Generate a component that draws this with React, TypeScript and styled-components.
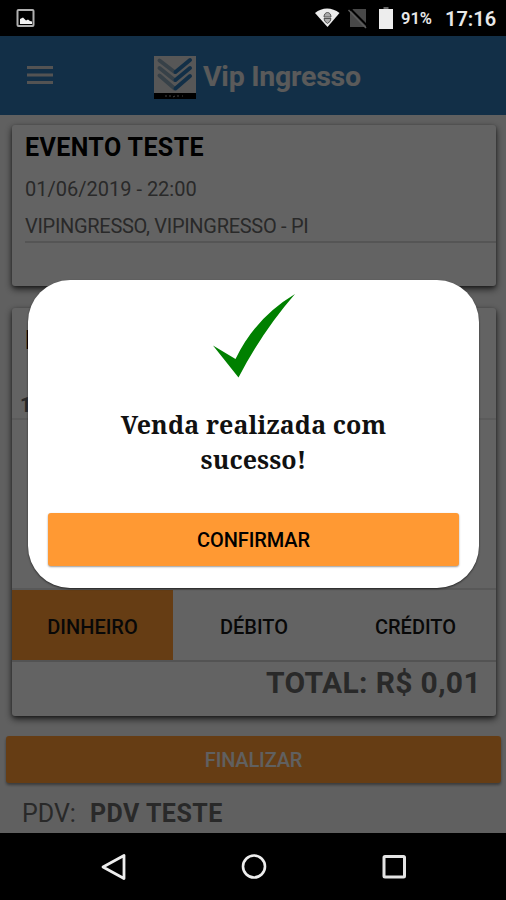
import React from "react";
import styled, { createGlobalStyle } from "styled-components";

const GlobalStyle = createGlobalStyle`
  * { box-sizing: border-box; }
  body { margin: 0; background: #000; font-family: Roboto, sans-serif; }
  button { font-family: inherit; border: 0; padding: 0; }
`;

const Phone = styled.div`
  width: 506px;
  height: 900px;
  display: flex;
  flex-direction: column;
  background: #000;
  overflow: hidden;
`;

const StatusBar = styled.div`
  height: 36px;
  flex: none;
  display: flex;
  align-items: center;
  padding: 0 11px 0 16px;
  color: #e8e8e8;
`;

const StatusIcons = styled.div`
  margin-left: auto;
  display: flex;
  align-items: center;
`;

const Battery = styled.span`
  width: 33px;
  margin-left: 8px;
  font-size: 16.5px;
  font-weight: 600;
  line-height: 36px;
  padding-top: 2px;
  white-space: nowrap;
`;

const Clock = styled.span`
  margin-left: 11px;
  width: 50px;
  font-size: 20px;
  font-weight: 600;
  line-height: 36px;
  padding-top: 2px;
  white-space: nowrap;
`;

const Screen = styled.main`
  position: relative;
  height: 797px;
  flex: none;
  display: flex;
  flex-direction: column;
  background: #f0f0f0;
`;

const Header = styled.header`
  height: 79px;
  flex: none;
  display: flex;
  align-items: center;
  background: #2f77b2;
  padding: 0 0 1px 27px;
`;

const Brand = styled.div`
  display: flex;
  align-items: center;
  margin-left: 100px;
  padding-top: 5px;
  gap: 7px;
`;

const BrandName = styled.h1`
  margin: -2px 0 0;
  font-size: 28.5px;
  font-weight: 700;
  line-height: 40px;
  color: #e0e0e0;
  letter-spacing: -0.25px;
`;

const Card = styled.section<{ $height: number; $top: number }>`
  height: ${(p) => p.$height}px;
  flex: none;
  margin: ${(p) => p.$top}px 10px 0 12px;
  display: flex;
  flex-direction: column;
  border-radius: 3px;
  background: #f8f8f8;
  box-shadow: 0 3px 7px rgba(0, 0, 0, 0.7), 0 1px 3px rgba(0, 0, 0, 0.3);
`;

const EventTitle = styled.h2`
  margin: 5px 0 0 13px;
  font-size: 25px;
  line-height: 36px;
  font-weight: 700;
  letter-spacing: 0.4px;
  color: #000;
`;

const EventLine = styled.p<{ $ruled?: boolean }>`
  margin: ${(p) => (p.$ruled ? 0 : 4)}px 0 0 13px;
  height: ${(p) => (p.$ruled ? 36 : 37)}px;
  font-size: 20px;
  line-height: 38px;
  color: #686868;
  letter-spacing: ${(p) => (p.$ruled ? "-0.3px" : "0")};
  border-bottom: ${(p) => (p.$ruled ? "2px solid #d4d4d4" : "0")};
`;

const Item = styled.div`
  height: 112px;
  display: flex;
  flex-direction: column;
  justify-content: space-between;
  padding: 15px 0 0 8px;
  border-bottom: 2px solid #e4e4e4;
`;

const ItemTitle = styled.h2`
  margin: 0 0 0 5px;
  font-size: 25px;
  line-height: 36px;
  color: #000;
`;

const ItemPrice = styled.strong`
  font-size: 20px;
  line-height: 26px;
  color: #686868;
`;

const Tabs = styled.div`
  height: 74px;
  flex: none;
  margin-top: auto;
  display: grid;
  grid-template-columns: 161px 162px 161px;
  border-top: 2px solid #dcdcdc;
  border-bottom: 2px solid #d0d0d0;
`;

const Tab = styled.button<{ $active?: boolean }>`
  background: ${(p) => (p.$active ? "#ff9933" : "transparent")};
  font-size: 20px;
  font-weight: 500;
  padding-top: 3px;
  color: #151515;
`;

const Total = styled.div`
  height: 54px;
  flex: none;
  padding: 2px 15px 0 0;
  text-align: right;
  font-size: 30px;
  line-height: 38px;
  font-weight: 700;
  letter-spacing: 0.35px;
  color: #686868;
`;

const Finish = styled.button`
  height: 47px;
  flex: none;
  margin: 20px 5px 0 6px;
  border-radius: 3px;
  background: #ff9933;
  color: #f0f0f0;
  font-size: 20px;
  font-weight: 500;
  letter-spacing: -0.15px;
  box-shadow: 0 2px 3px rgba(0, 0, 0, 0.4);
`;

const Terminal = styled.div`
  display: flex;
  gap: 14px;
  padding: 12px 0 0 22px;
  font-size: 25px;
  line-height: 38px;
  color: #686868;
`;

const TerminalName = styled.strong`
  letter-spacing: 0.5px;
`;

const Overlay = styled.div`
  position: absolute;
  inset: 0;
  background: rgba(0, 0, 0, 0.6);
  display: flex;
  align-items: flex-start;
  padding: 244px 27px 0 28px;
`;

const Dialog = styled.div`
  width: 451px;
  height: 308px;
  display: flex;
  flex-direction: column;
  align-items: center;
  padding: 13px 20px 22px;
  background: #fff;
  border-radius: 42px;
  box-shadow: 0 1px 2px rgba(0, 0, 0, 0.6);
`;

const Message = styled.p`
  margin: 28px 0 0;
  width: 300px;
  text-align: center;
  font-family: "Noto Serif", "DejaVu Serif Condensed", "DejaVu Serif", serif;
  font-size: 25px;
  line-height: 34.5px;
  font-weight: 700;
  letter-spacing: 0.1px;
  color: #111;
`;

const Confirm = styled.button`
  margin-top: auto;
  width: 411px;
  height: 53px;
  flex: none;
  border-radius: 3px;
  background: #ff9933;
  color: #000;
  font-size: 20px;
  font-weight: 500;
  padding-top: 1px;
  letter-spacing: -0.1px;
  box-shadow: 0 1px 2px rgba(0, 0, 0, 0.4);
`;

const NavBar = styled.nav`
  height: 67px;
  display: flex;
  align-items: center;
  justify-content: center;
  gap: 112px;
  padding-left: 1px;
`;

const PictureIcon = () => (
  <svg width="20" height="20" viewBox="0 0 20 20">
    <rect x="1.5" y="2" width="16" height="16" rx="1" fill="none" stroke="#b0b0b0" strokeWidth="2" />
    <path d="M4 16v-5l3-1.5 3 3 2-1 2 1.5 2 .5V16z" fill="#f4f4f4" />
  </svg>
);

const SignalIcons = () => (
  <svg width="80" height="24" viewBox="0 0 80 24">
    <path d="M2 7C9 1 19 1 26.500 7L14.500 21z" fill="#ececec" />
    <path d="M11 11c0-6 7-6 7 0zM11 12.500h7q0 3-3.500 5-3.500-2-3.500-5z" fill="#aaa" stroke="#555" strokeWidth="1" />
    <path d="M40 3h13v18H37V6z" fill="#484848" />
    <path d="M36.500 2l18 18" stroke="#000" strokeWidth="2" />
    <path d="M35.500 4l17.500 18" stroke="#5c5c5c" strokeWidth="1.500" />
    <path d="M70.500 1h5v3h-5z" fill="#666" />
    <path d="M66 3h14v20H66z" fill="#ededed" />
  </svg>
);

const MenuIcon = () => (
  <svg width="27" height="20" viewBox="0 0 27 20">
    <path d="M0 2.500h26M0 10h26M0 17.500h26" stroke="#d0d0d0" strokeWidth="3" />
  </svg>
);

const Logo = () => (
  <svg width="42" height="43" viewBox="0 0 42 43">
    <rect width="42" height="43" fill="#dadada" />
    <rect y="37" width="42" height="6" fill="#000" />
    <g fill="none" strokeWidth="4" strokeLinecap="round">
      <path d="M5.500 4.500L20.500 16M5.500 12L20.500 24M5.500 19.500L20.500 32.500" stroke="#8ba3b5" />
      <path d="M36 4L21.500 16M36 12L21.500 24M36 20L21.500 32.500" stroke="#2f77b2" />
    </g>
    <path d="M12 39v2M15 40h2M19 41l2-1M24 39v2M28 40h1" stroke="#aaa" />
  </svg>
);

const Check = () => (
  <svg width="84" height="86" viewBox="0 0 84 86">
    <path d="M1 52.500L23.500 66Q43 25 83 1Q50 39 26.500 84.500Z" fill="#008000" />
  </svg>
);

export default function App() {
  return (
    <Phone>
      <GlobalStyle />
      <StatusBar>
        <PictureIcon />
        <StatusIcons>
          <SignalIcons />
          <Battery>91%</Battery>
          <Clock>17:16</Clock>
        </StatusIcons>
      </StatusBar>
      <Screen>
        <Header>
          <MenuIcon />
          <Brand>
            <Logo />
            <BrandName>Vip Ingresso</BrandName>
          </Brand>
        </Header>
        <Card $top={10} $height={161}>
          <EventTitle>EVENTO TESTE</EventTitle>
          <EventLine>01/06/2019 - 22:00</EventLine>
          <EventLine $ruled>VIPINGRESSO, VIPINGRESSO - PI</EventLine>
        </Card>
        <Card $top={22} $height={408}>
          <Item>
            <ItemTitle>I</ItemTitle>
            <ItemPrice>1</ItemPrice>
          </Item>
          <Tabs>
            <Tab $active>DINHEIRO</Tab>
            <Tab>DÉBITO</Tab>
            <Tab>CRÉDITO</Tab>
          </Tabs>
          <Total>TOTAL: R$ 0,01</Total>
        </Card>
        <Finish>FINALIZAR</Finish>
        <Terminal>
          <span>PDV:</span>
          <TerminalName>PDV TESTE</TerminalName>
        </Terminal>
        <Overlay>
          <Dialog role="dialog">
            <Check />
            <Message>Venda realizada com sucesso!</Message>
            <Confirm>CONFIRMAR</Confirm>
          </Dialog>
        </Overlay>
      </Screen>
      <NavBar>
        <svg width="28" height="28" viewBox="0 0 28 28">
          <path d="M3 14L24 2.500V25.500Z" fill="none" stroke="#eee" strokeWidth="2.800" strokeLinejoin="round" />
        </svg>
        <svg width="28" height="28" viewBox="0 0 28 28">
          <circle cx="14" cy="13.500" r="11" fill="none" stroke="#eee" strokeWidth="2.600" />
        </svg>
        <svg width="28" height="28" viewBox="0 0 28 28">
          <rect x="4" y="3.500" width="20.500" height="20.500" rx="1" fill="none" stroke="#e4e4e4" strokeWidth="3" />
        </svg>
      </NavBar>
    </Phone>
  );
}
